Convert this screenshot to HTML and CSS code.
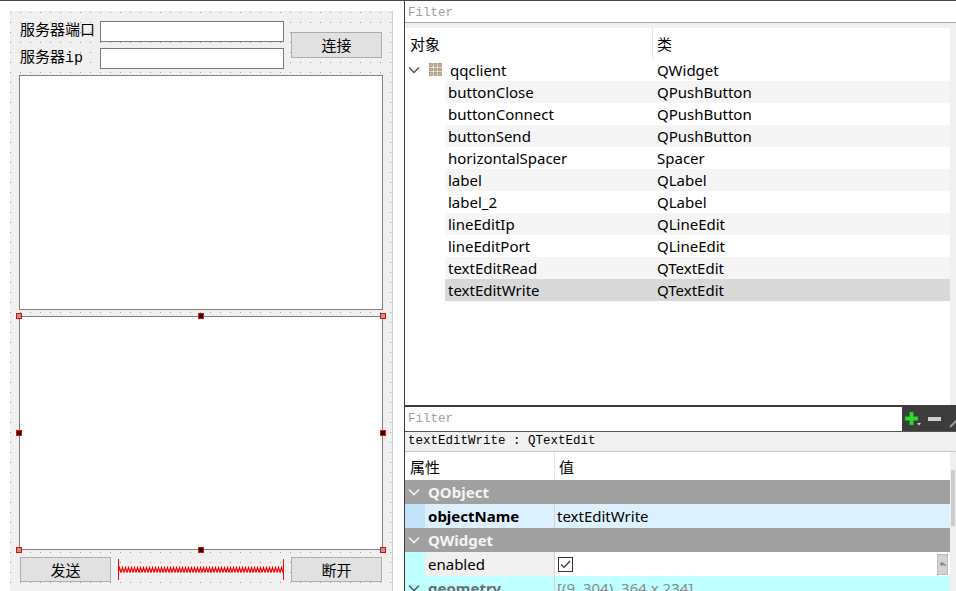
FILE: index.html
```html
<!DOCTYPE html>
<html>
<head>
<meta charset="utf-8">
<link rel="stylesheet" href="styles.css">
</head>
<body>
<div class="app">
  <div class="left">
    <div class="form">
      <div class="conn">
        <div class="lbl">服务器端口</div>
        <div class="edit"></div>
        <div class="btn btn-conn">连接</div>
        <div class="lbl">服务器ip</div>
        <div class="edit"></div>
      </div>
      <div class="textedit te1"></div>
      <div class="textedit te2">
        <span class="h tl"></span><span class="h m tm"></span><span class="h tr"></span>
        <span class="h m ml"></span><span class="h m mr"></span>
        <span class="h bl"></span><span class="h m bm"></span><span class="h br"></span>
      </div>
      <div class="bottom">
        <div class="btn">发送</div>
        <div class="spacer">
          <svg width="166" height="22" viewBox="0 0 166 22">
            <defs>
              <pattern id="zig" width="3" height="22" patternUnits="userSpaceOnUse">
                <path d="M0 13.5 L1.5 8.5 L3 13.5" stroke="#ff0000" stroke-width="1.2" fill="none"/>
              </pattern>
            </defs>
            <line x1="0.5" y1="0" x2="0.5" y2="21" stroke="#ff0000"/>
            <line x1="165.5" y1="0" x2="165.5" y2="21" stroke="#ff0000"/>
            <rect x="1" y="7" width="164" height="8" fill="url(#zig)"/>
          </svg>
        </div>
        <div class="btn">断开</div>
      </div>
    </div>
  </div>

  <div class="right">
    <div class="tfilter"><span class="ph">Filter</span></div>
    <div class="tree">
      <div class="thead"><div class="hc1">对象</div><div class="hc2">类</div></div>
      <div class="trow root">
        <svg class="chev" width="12" height="8" viewBox="0 0 12 8"><polyline points="1,1.5 6,6.5 11,1.5" fill="none" stroke="#555" stroke-width="1.5"/></svg>
        <svg class="ticon" width="13" height="13" viewBox="0 0 13 13">
          <g fill="#c9b398" stroke="#927b62" stroke-width="0.6">
            <rect x="0.5" y="0.5" width="3" height="3"/><rect x="5" y="0.5" width="3" height="3"/><rect x="9.5" y="0.5" width="3" height="3"/>
            <rect x="0.5" y="5" width="3" height="3"/><rect x="5" y="5" width="3" height="3"/><rect x="9.5" y="5" width="3" height="3"/>
            <rect x="0.5" y="9.5" width="3" height="3"/><rect x="5" y="9.5" width="3" height="3"/><rect x="9.5" y="9.5" width="3" height="3"/>
          </g>
        </svg>
        <span class="rname">qqclient</span><span class="cls">QWidget</span>
      </div>
      <div class="trow child alt"><span class="cname">buttonClose</span><span class="cls">QPushButton</span></div>
      <div class="trow child"><span class="cname">buttonConnect</span><span class="cls">QPushButton</span></div>
      <div class="trow child alt"><span class="cname">buttonSend</span><span class="cls">QPushButton</span></div>
      <div class="trow child"><span class="cname">horizontalSpacer</span><span class="cls">Spacer</span></div>
      <div class="trow child alt"><span class="cname">label</span><span class="cls">QLabel</span></div>
      <div class="trow child"><span class="cname">label_2</span><span class="cls">QLabel</span></div>
      <div class="trow child alt"><span class="cname">lineEditIp</span><span class="cls">QLineEdit</span></div>
      <div class="trow child"><span class="cname">lineEditPort</span><span class="cls">QLineEdit</span></div>
      <div class="trow child alt"><span class="cname">textEditRead</span><span class="cls">QTextEdit</span></div>
      <div class="trow child sel"><span class="cname">textEditWrite</span><span class="cls">QTextEdit</span></div>
    </div>
    <div class="split"></div>
    <div class="pfilter">
      <div class="pinput"><span class="ph">Filter</span></div>
      <div class="tools">
        <svg width="54" height="24" viewBox="0 0 54 24">
          <path d="M7.5 5h4v4.5h4.5v4h-4.5v4.5h-4v-4.5h-4.5v-4h4.5z" fill="#36d336" stroke="#179217" stroke-width="0.6"/>
          <path d="M15 16h4l-2 2.5z" fill="#d8d8d8"/>
          <rect x="26" y="10" width="13" height="4" fill="#cfcfcf"/>
          <path d="M48 20 L54 14" stroke="#9a9a9a" stroke-width="2"/>
        </svg>
      </div>
    </div>
    <div class="objlabel">textEditWrite : QTextEdit</div>
    <div class="pwrap">
      <div class="props">
        <div class="phead"><div class="phc1">属性</div><div class="phc2">值</div></div>
        <div class="prow grp">
          <div class="strip"><svg width="12" height="8" viewBox="0 0 12 8"><polyline points="1,1.5 6,6.5 11,1.5" fill="none" stroke="#f2f2f2" stroke-width="1.6"/></svg></div>
          <div class="gname">QObject</div>
        </div>
        <div class="prow blue">
          <div class="strip"></div>
          <div class="pname bold">objectName</div>
          <div class="pval">textEditWrite</div>
        </div>
        <div class="prow grp">
          <div class="strip"><svg width="12" height="8" viewBox="0 0 12 8"><polyline points="1,1.5 6,6.5 11,1.5" fill="none" stroke="#f2f2f2" stroke-width="1.6"/></svg></div>
          <div class="gname">QWidget</div>
        </div>
        <div class="prow en">
          <div class="strip"></div>
          <div class="pname">enabled</div>
          <div class="pval white">
            <svg class="cb" width="15" height="15" viewBox="0 0 15 15"><rect x="0.5" y="0.5" width="14" height="14" fill="#fff" stroke="#333"/><polyline points="3,7.5 6,10.5 12,4" fill="none" stroke="#333" stroke-width="1.2"/></svg>
            <div class="reset"><svg width="9" height="19" viewBox="0 0 9 19"><path d="M1.5 9 L4.5 6.2 L4.5 8 Q8 8 8 11.5 Q7 10 4.5 10 L4.5 11.8 Z" fill="#8a8a8a"/></svg></div>
          </div>
        </div>
        <div class="prow geo">
          <div class="strip"><svg width="12" height="8" viewBox="0 0 12 8"><polyline points="1,1.5 6,6.5 11,1.5" fill="none" stroke="#555" stroke-width="1.5"/></svg></div>
          <div class="pname bold grey">geometry</div>
          <div class="pval grey">[(9, 304), 364 x 234]</div>
        </div>
      </div>
      <div class="vscroll"><div class="thumb"></div></div>
    </div>
  </div>
</div>
</body>
</html>
```

FILE: styles.css
```css
html, body {
  margin: 0;
  padding: 0;
}
body {
  width: 956px;
  height: 591px;
  overflow: hidden;
  font-family: "Noto Sans", "Noto Sans CJK SC", sans-serif;
  font-size: 15px;
  color: #000;
  background: #fff;
}
.app {
  display: flex;
  height: 591px;
  box-sizing: border-box;
  border-top: 1px solid #474747;
}

/* ---------- left designer form ---------- */
.left {
  width: 404px;
  flex: none;
  background: #fff;
  padding: 10px 0 0 10px;
  box-sizing: border-box;
}
.form {
  width: 383px;
  height: 100%;
  box-sizing: border-box;
  border-right: 1px solid #d2d2d2;
  background-color: #f0f0f0;
  background-image:
    linear-gradient(to right, #f0f0f0 9px, transparent 9px),
    linear-gradient(to bottom, #f0f0f0 9px, #9c9c9c 9px);
  background-size: 10px 10px;
  background-position: 1px 2px;
  padding: 10px 0 0 9px;
  font-family: "Liberation Mono", "Noto Sans CJK SC", monospace;
  font-size: 15px;
}
.conn {
  display: grid;
  grid-template-columns: 81px 184px 98px;
  grid-template-rows: 21px 21px;
  row-gap: 6px;
}
.lbl {
  padding-left: 1px;
  line-height: 21px;
  white-space: nowrap;
}
.edit {
  background: #fff;
  border: 1px solid #7a7a7a;
  box-sizing: border-box;
}
.btn {
  background: #e1e1e1;
  border: 1px solid #adadad;
  box-sizing: border-box;
  display: flex;
  align-items: center;
  justify-content: center;
  padding-bottom: 1px;
  font-family: "Noto Sans CJK SC", sans-serif;
  font-size: 15px;
}
.btn-conn {
  grid-column: 3;
  grid-row: 1 / span 2;
  align-self: center;
  margin-left: 7px;
  height: 26px;
  padding-bottom: 2px;
}
.textedit {
  width: 364px;
  background: #fff;
  border: 1px solid #828282;
  box-sizing: border-box;
}
.te1 {
  margin-top: 6px;
  height: 235px;
}
.te2 {
  margin-top: 6px;
  height: 234px;
  position: relative;
}
.h {
  position: absolute;
  width: 6px;
  height: 6px;
  box-sizing: border-box;
  border: 1px solid #ff0000;
  background: #a0a0a0;
}
.h.m { background: #000; }
.tl { left: -4px; top: -4px; }
.tm { left: calc(50% - 3px); top: -4px; }
.tr { right: -4px; top: -4px; }
.ml { left: -4px; top: calc(50% - 3px); }
.mr { right: -4px; top: calc(50% - 3px); }
.bl { left: -4px; bottom: -4px; }
.bm { left: calc(50% - 3px); bottom: -4px; }
.br { right: -4px; bottom: -4px; }

.bottom {
  display: flex;
  gap: 7px;
  margin-top: 7px;
  height: 25px;
  padding-left: 1px;
}
.bottom .btn { width: 91px; }
.spacer {
  width: 166px;
  height: 22px;
  margin-top: 2px;
}
.spacer svg { display: block; }

/* ---------- right panels ---------- */
.right {
  flex: 1;
  background: #f0f0f0;
  border-left: 1px solid #3c3c3c;
  display: flex;
  flex-direction: column;
  min-width: 0;
}
.tfilter {
  height: 21px;
  background: #fff;
  border-bottom: 1px solid #a8a8a8;
  flex: none;
}
.ph {
  display: block;
  font-family: "Liberation Mono", monospace;
  font-size: 12.5px;
  color: #a0a0a0;
  padding-left: 3px;
  padding-top: 1px;
  line-height: 22px;
}
.tree {
  margin-top: 5px;
  width: 545px;
  height: 377px;
  background: #fff;
  flex: none;
}
.thead {
  display: flex;
  height: 31px;
}
.hc1 {
  width: 248px;
  box-sizing: border-box;
  padding-left: 5px;
  border-right: 1px solid #e5e5e5;
  display: flex;
  align-items: center;
}
.hc2 {
  padding-left: 4px;
  display: flex;
  align-items: center;
}
.trow {
  display: flex;
  align-items: center;
  height: 22px;
  white-space: nowrap;
}
.trow.root { padding-left: 3px; padding-bottom: 1px; box-sizing: border-box; }
.chev { flex: none; }
.ticon { flex: none; margin-left: 9px; }
.rname {
  margin-left: 8px;
  width: 203px;
}
.trow.child {
  margin-left: 40px;
  padding-left: 3px;
}
.cname { width: 205px; }
.cls { padding-left: 4px; }
.alt { background: #f5f5f5; }
.sel { background: #d9d9d9; }

.split {
  height: 2px;
  background: #3c3c3c;
  flex: none;
}
.pfilter {
  display: flex;
  height: 24px;
  border-bottom: 1px solid #555;
  flex: none;
}
.pinput {
  flex: 1;
  background: #fff;
}
.pinput .ph { line-height: 24px; padding-top: 0; }
.tools {
  width: 54px;
  background: #3c3c3c;
}
.tools svg { display: block; }
.objlabel {
  height: 19px;
  line-height: 19px;
  padding-left: 3px;
  font-family: "Liberation Mono", monospace;
  font-size: 12.5px;
  border-bottom: 1px solid #c8c8c8;
  flex: none;
  white-space: nowrap;
}
.pwrap {
  flex: 1;
  display: flex;
}
.props {
  width: 545px;
  background: #fff;
}
.phead {
  display: flex;
  height: 28px;
}
.phc1 {
  width: 150px;
  box-sizing: border-box;
  padding-left: 5px;
  border-right: 1px solid #e5e5e5;
  display: flex;
  align-items: center;
}
.phc2 {
  padding-left: 4px;
  display: flex;
  align-items: center;
}
.prow {
  display: flex;
  height: 24px;
  align-items: stretch;
  white-space: nowrap;
}
.strip {
  width: 20px;
  flex: none;
  box-sizing: border-box;
  padding-left: 3px;
  display: flex;
  align-items: center;
}
.pname {
  width: 130px;
  box-sizing: border-box;
  padding-left: 3px;
  border-right: 1px solid #d4d4d4;
  display: flex;
  align-items: center;
}
.pval {
  flex: 1;
  padding-left: 2px;
  display: flex;
  align-items: center;
}
.bold { font-weight: bold; }
.grp {
  background: #a0a0a0;
  color: #f4f4f4;
}
.gname {
  padding-left: 3px;
  font-weight: bold;
  display: flex;
  align-items: center;
}
.blue { background: #ddf0fe; }
.blue .strip { background: #c2e2fa; }
.en .strip { background: #bfffff; }
.en .pname { background: #f0f0f0; }
.white { background: #fff; }
.cb { margin-left: 1px; flex: none; }
.reset {
  margin-left: auto;
  margin-right: 2px;
  width: 11px;
  height: 21px;
  box-sizing: border-box;
  background: #d3d3d3;
  border: 1px solid #bdbdbd;
  align-self: center;
}
.reset svg { display: block; }
.geo { background: #bfffff; }
.grey { color: #8a8a8a; }
.pname.grey { color: #6e6e6e; }
.vscroll {
  width: 6px;
  flex: none;
  background: #f0f0f0;
}
.thumb {
  margin-top: 18px;
  margin-left: 1px;
  width: 4px;
  height: 56px;
  background: #cdcdcd;
}
```
